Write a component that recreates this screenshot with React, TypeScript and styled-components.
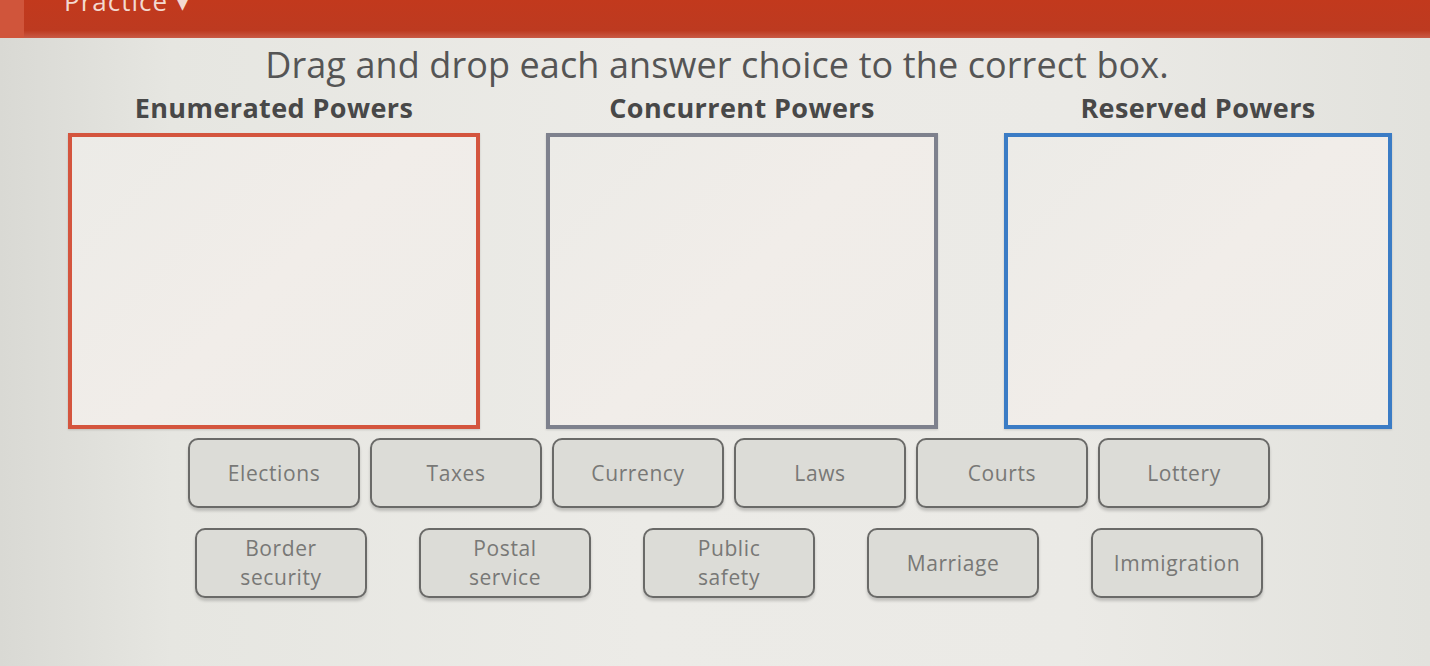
import React from "react";
import styled, { createGlobalStyle } from "styled-components";

const GlobalStyle = createGlobalStyle`
  html, body {
    margin: 0;
    padding: 0;
    width: 1430px;
    height: 666px;
    overflow: hidden;
  }
  body {
    font-family: "Open Sans", "Noto Sans", sans-serif;
  }
`;

const Page = styled.div`
  width: 1430px;
  height: 666px;
  display: flex;
  flex-direction: column;
  background: linear-gradient(90deg, #d9d9d4 0%, #e6e6e1 12%, #ecebe7 45%, #ebeae6 75%, #e2e2dd 100%);
  overflow: hidden;
`;

const TopBar = styled.header`
  height: 38px;
  flex: none;
  display: flex;
  align-items: flex-end;
  background: linear-gradient(180deg, #c2391d 0%, #bd3a20 80%, #c95a45 100%);
  overflow: hidden;
`;

const TabEdge = styled.div`
  width: 24px;
  height: 100%;
  background: #d0553b;
  flex: none;
`;

const TabLabel = styled.span`
  color: #f3d9d0;
  font-size: 26px;
  line-height: 30px;
  margin: 0 0 22px 40px;
  letter-spacing: 1px;
`;

const Title = styled.h1`
  margin: 8px 0 0;
  padding-left: 4px;
  text-align: center;
  font-weight: 400;
  font-size: 36px;
  line-height: 38px;
  color: #555555;
  letter-spacing: 0.1px;
`;

const Columns = styled.div`
  display: grid;
  grid-template-columns: 412px 392px 388px;
  column-gap: 66px;
  padding-left: 68px;
  margin-top: 9px;
`;

const Column = styled.section`
  display: flex;
  flex-direction: column;
  align-items: center;
`;

const Heading = styled.h2`
  margin: 0 0 10px;
  font-size: 27px;
  line-height: 30px;
  font-weight: 700;
  color: #484848;
  letter-spacing: 0.4px;
`;

const DropBox = styled.div<{ $edge: string }>`
  width: 100%;
  height: 296px;
  box-sizing: border-box;
  border: 4px solid ${(p) => p.$edge};
  background: linear-gradient(135deg, #ecebe7 0%, #f1ede9 50%, #eeece8 100%);
  box-shadow: 0 1px 2px rgba(0, 0, 0, 0.15);
`;

const ChipRow = styled.div<{ $gap: number; $top: number }>`
  display: flex;
  justify-content: center;
  gap: ${(p) => p.$gap}px;
  padding-left: 28px;
  margin-top: ${(p) => p.$top}px;
`;

const Chip = styled.div`
  width: 172px;
  height: 70px;
  box-sizing: border-box;
  display: flex;
  align-items: center;
  justify-content: center;
  text-align: center;
  border: 2.5px solid #6a6a68;
  border-radius: 10px;
  background: #dcdcd7;
  box-shadow: 0 3px 3px rgba(0, 0, 0, 0.18);
  color: #787876;
  font-size: 21px;
  line-height: 29px;
  letter-spacing: 0.6px;
`;

const boxes = [
  { title: "Enumerated Powers", edge: "#d4553e" },
  { title: "Concurrent Powers", edge: "#7e818d" },
  { title: "Reserved Powers", edge: "#3b7cc5" },
];

const firstRow = ["Elections", "Taxes", "Currency", "Laws", "Courts", "Lottery"];
const secondRow = [
  ["Border", "security"],
  ["Postal", "service"],
  ["Public", "safety"],
  ["Marriage"],
  ["Immigration"],
];

export default function App() {
  return (
    <>
      <GlobalStyle />
      <Page>
        <TopBar>
          <TabEdge />
          <TabLabel>Practice ▾</TabLabel>
        </TopBar>
        <Title>Drag and drop each answer choice to the correct box.</Title>
        <Columns>
          {boxes.map((b) => (
            <Column key={b.title}>
              <Heading>{b.title}</Heading>
              <DropBox $edge={b.edge} />
            </Column>
          ))}
        </Columns>
        <ChipRow $gap={10} $top={9}>
          {firstRow.map((t) => (
            <Chip key={t}>{t}</Chip>
          ))}
        </ChipRow>
        <ChipRow $gap={52} $top={20}>
          {secondRow.map((lines) => (
            <Chip key={lines.join(" ")}>
              <span>
                {lines.map((l, i) => (
                  <React.Fragment key={l}>
                    {i > 0 && <br />}
                    {l}
                  </React.Fragment>
                ))}
              </span>
            </Chip>
          ))}
        </ChipRow>
      </Page>
    </>
  );
}
